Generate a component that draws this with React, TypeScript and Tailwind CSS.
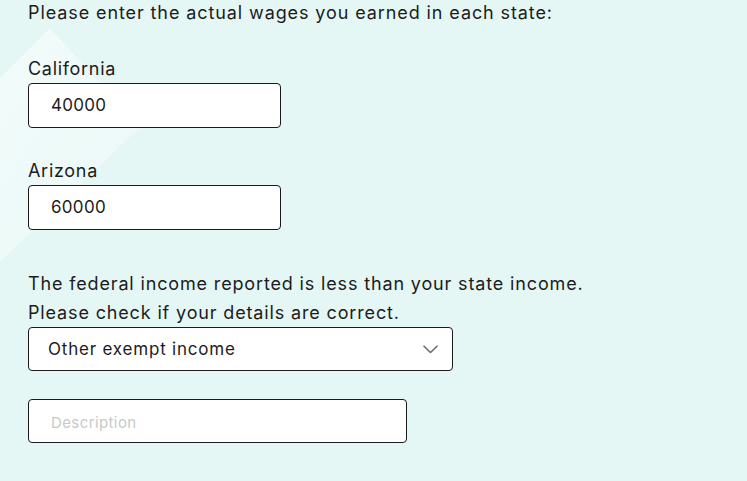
const font = { fontFamily: "Inter, 'Open Sans', sans-serif" };

const App = () => {
  return (
    <div
      className="relative w-[747px] h-[481px] overflow-hidden bg-[#e4f7f5] text-[#1c1c1c]"
      style={font}
    >
      {/* faint lighter shape in the background */}
      <svg className="absolute left-0 top-0" width="160" height="280" viewBox="0 0 160 280">
        <defs>
          <linearGradient id="shine" x1="0" y1="0" x2="1" y2="1">
            <stop offset="0" stopColor="#f3fcfb" stopOpacity="0.9" />
            <stop offset="1" stopColor="#eefaf9" stopOpacity="0.6" />
          </linearGradient>
        </defs>
        <polygon points="50,28 140,127 0,262 0,78" fill="url(#shine)" />
      </svg>

      <div className="relative pl-[28px]">
        <p className="mt-[-1px] text-[18px] tracking-[0.9px] leading-[28px]">
          Please enter the actual wages you earned in each state:
        </p>

        <label className="block mt-[28px] text-[18px] tracking-[0.7px] leading-[28px]">California</label>
        <div className="w-[253px] h-[45px] rounded-[4px] border border-[#1a1a1a] bg-white flex items-center pl-[22px] text-[17px] tracking-[0.3px]">
          40000
        </div>

        <label className="block mt-[29px] text-[18px] tracking-[0.7px] leading-[28px]">Arizona</label>
        <div className="w-[253px] h-[45px] rounded-[4px] border border-[#1a1a1a] bg-white flex items-center pl-[22px] text-[17px] tracking-[0.3px]">
          60000
        </div>

        <p className="mt-[39px] text-[18px] tracking-[0.85px] leading-[29px]">
          The federal income reported is less than your state income.
          <br />
          Please check if your details are correct.
        </p>

        <div className="w-[425px] h-[44px] rounded-[4px] border border-[#1a1a1a] bg-white flex items-center justify-between pl-[19px] pr-[14px] pt-[1px] text-[17px] tracking-[0.8px]">
          <span>Other exempt income</span>
          <svg width="15" height="9" viewBox="0 0 15 9" fill="none">
            <path d="M1 1.2 L7.5 7.5 L14 1.2" stroke="#6b6b6b" strokeWidth="1.6" strokeLinecap="round" strokeLinejoin="round" />
          </svg>
        </div>

        <div className="mt-[28px] w-[379px] h-[44px] rounded-[4px] border border-[#1a1a1a] bg-white flex items-center pl-[22px] pt-[4px] text-[15px] tracking-[0.4px] text-[#c9c9c9]">
          Description
        </div>
      </div>
    </div>
  );
};

export default App;
